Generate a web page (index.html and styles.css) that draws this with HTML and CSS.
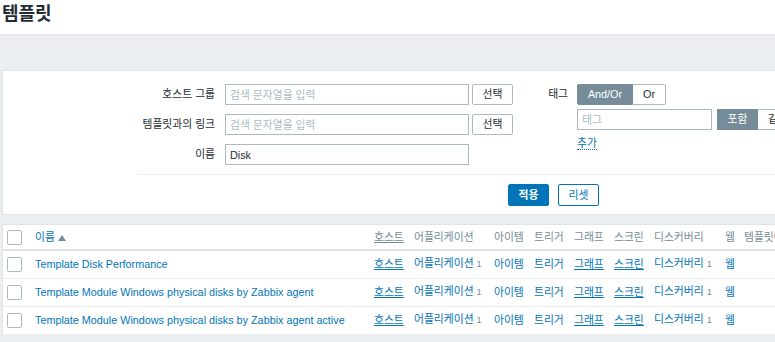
FILE: index.html
```html
<!DOCTYPE html>
<html lang="ko">
<head>
<meta charset="utf-8">
<title>템플릿</title>
<link rel="stylesheet" href="styles.css">
</head>
<body>
<header class="page-header">
  <h1 class="page-title">템플릿</h1>
</header>
<main class="content">
  <section class="filter">
    <div class="filter-body">
      <div class="filter-col filter-col-left">
        <div class="form-row">
          <label class="form-label">호스트 그룹</label>
          <div class="form-field">
            <input class="text-input" type="text" placeholder="검색 문자열을 입력">
            <button class="btn btn-select" type="button">선택</button>
          </div>
        </div>
        <div class="form-row">
          <label class="form-label">템플릿과의 링크</label>
          <div class="form-field">
            <input class="text-input" type="text" placeholder="검색 문자열을 입력">
            <button class="btn btn-select" type="button">선택</button>
          </div>
        </div>
        <div class="form-row">
          <label class="form-label">이름</label>
          <div class="form-field">
            <input class="text-input" type="text" value="Disk">
          </div>
        </div>
      </div>
      <div class="filter-col filter-col-right">
        <div class="form-row">
          <label class="form-label form-label-tag">태그</label>
          <div class="tag-field">
            <div class="segmented">
              <span class="seg seg-on seg-andor">And/Or</span><span class="seg seg-or">Or</span>
            </div>
            <div class="tag-row">
              <input class="text-input tag-input" type="text" placeholder="태그">
              <div class="segmented">
                <span class="seg seg-on seg-op">포함</span><span class="seg seg-op">같음</span>
              </div>
              <input class="text-input tag-value" type="text" placeholder="값">
            </div>
            <a class="link-add" href="#">추가</a>
          </div>
        </div>
      </div>
    </div>
    <div class="filter-footer">
      <button class="btn btn-apply" type="button">적용</button>
      <button class="btn btn-reset" type="button">리셋</button>
    </div>
  </section>

  <section class="list">
    <table class="list-table">
      <colgroup>
        <col class="c-check"><col class="c-name"><col class="c-host"><col class="c-app"><col class="c-item"><col class="c-trig"><col class="c-graph"><col class="c-screen"><col class="c-disc"><col class="c-web"><col class="c-linked">
      </colgroup>
      <thead>
        <tr>
          <th><span class="checkbox"></span></th>
          <th><a class="sort-link" href="#">이름</a><span class="sort-arrow"></span></th>
          <th><span class="th-underline">호스트</span></th>
          <th>어플리케이션</th>
          <th>아이템</th>
          <th>트리거</th>
          <th>그래프</th>
          <th>스크린</th>
          <th>디스커버리</th>
          <th>웹</th>
          <th>템플릿에 링크됨</th>
        </tr>
      </thead>
      <tbody>
        <tr>
          <td><span class="checkbox"></span></td>
          <td><a class="link" href="#">Template Disk Performance</a></td>
          <td><a class="link ul" href="#">호스트</a></td>
          <td><a class="link" href="#">어플리케이션</a> <sup class="count">1</sup></td>
          <td><a class="link" href="#">아이템</a></td>
          <td><a class="link" href="#">트리거</a></td>
          <td><a class="link ul" href="#">그래프</a></td>
          <td><a class="link ul" href="#">스크린</a></td>
          <td><a class="link" href="#">디스커버리</a> <sup class="count">1</sup></td>
          <td><a class="link" href="#">웹</a></td>
          <td></td>
        </tr>
        <tr>
          <td><span class="checkbox"></span></td>
          <td><a class="link" href="#">Template Module Windows physical disks by Zabbix agent</a></td>
          <td><a class="link ul" href="#">호스트</a></td>
          <td><a class="link" href="#">어플리케이션</a> <sup class="count">1</sup></td>
          <td><a class="link" href="#">아이템</a></td>
          <td><a class="link" href="#">트리거</a></td>
          <td><a class="link ul" href="#">그래프</a></td>
          <td><a class="link ul" href="#">스크린</a></td>
          <td><a class="link" href="#">디스커버리</a> <sup class="count">1</sup></td>
          <td><a class="link" href="#">웹</a></td>
          <td></td>
        </tr>
        <tr>
          <td><span class="checkbox"></span></td>
          <td><a class="link" href="#">Template Module Windows physical disks by Zabbix agent active</a></td>
          <td><a class="link ul" href="#">호스트</a></td>
          <td><a class="link" href="#">어플리케이션</a> <sup class="count">1</sup></td>
          <td><a class="link" href="#">아이템</a></td>
          <td><a class="link" href="#">트리거</a></td>
          <td><a class="link ul" href="#">그래프</a></td>
          <td><a class="link ul" href="#">스크린</a></td>
          <td><a class="link" href="#">디스커버리</a> <sup class="count">1</sup></td>
          <td><a class="link" href="#">웹</a></td>
          <td></td>
        </tr>
      </tbody>
    </table>
  </section>
</main>
</body>
</html>
```

FILE: styles.css
```css
* { box-sizing: border-box; }

html, body {
  margin: 0;
  padding: 0;
  overflow: hidden;
}

body {
  width: 1000px;
  height: 342px;
  background: #ebeef0;
  color: #1f2c33;
  font-family: "Liberation Sans", "Noto Sans CJK KR", Arial, sans-serif;
  font-size: 10.8px;
  line-height: 13px;
}

.page-header {
  background: #ffffff;
  height: 35px;
  border-bottom: 1px solid #dfe4e7;
  padding: 2px 0 0 2px;
}

.page-title {
  margin: 0;
  font-size: 18px;
  line-height: 24px;
  font-weight: bold;
  color: #1f2c33;
}

.content {
  padding: 35px 0 0 2px;
}

/* ---------- filter ---------- */
.filter {
  background: #ffffff;
  border: 1px solid #dfe4e7;
  border-right: none;
}

.filter-body {
  display: flex;
  padding: 13px 0 9px 0;
}

.filter-col-left {
  display: flex;
  flex-direction: column;
  gap: 9px;
  width: 545px;
}

.form-row {
  display: flex;
  align-items: flex-start;
}

.form-label {
  width: 222px;
  text-align: right;
  padding-right: 10px;
  line-height: 21px;
  white-space: nowrap;
}

.form-label-tag {
  width: 29px;
  padding-right: 9px;
}

.form-field {
  display: flex;
  gap: 3px;
}

.text-input {
  width: 244px;
  height: 21px;
  border: 1px solid #acbbc2;
  padding: 0 4px;
  font: inherit;
  color: #1f2c33;
  background: #ffffff;
  outline: none;
}

.text-input::placeholder {
  color: #acbbc2;
}

.btn {
  height: 21px;
  font: inherit;
  padding: 0;
  background: #ffffff;
  border: 1px solid #acbbc2;
  color: #1f2c33;
  border-radius: 2px;
  cursor: pointer;
}

.btn-select {
  width: 41px;
}

.tag-field {
  display: flex;
  flex-direction: column;
  gap: 4px;
}

.segmented {
  display: flex;
}

.seg {
  display: inline-block;
  height: 21px;
  line-height: 19px;
  border: 1px solid #acbbc2;
  background: #ffffff;
  color: #1f2c33;
  text-align: center;
}

.seg-on {
  background: #768d99;
  border-color: #768d99;
  color: #ffffff;
}

.seg-andor {
  width: 56px;
  border-radius: 2px 0 0 2px;
}

.seg-or {
  width: 33px;
  border-left: none;
  border-radius: 0 2px 2px 0;
}

.seg-op {
  width: 41px;
}

.seg-op + .seg-op {
  border-left: none;
}

.tag-row {
  display: flex;
  gap: 5px;
}

.tag-input {
  width: 135px;
}

.tag-value {
  width: 135px;
}

.link-add {
  align-self: flex-start;
  margin-top: 3px;
  color: #0275b8;
  text-decoration: none;
  border-bottom: 1px dotted #0275b8;
  line-height: 12px;
}

.filter-footer {
  margin-left: 134px;
  border-top: 1px solid #ebeef0;
  padding: 9px 0 8px 371px;
  display: flex;
  gap: 9px;
}

.btn-apply {
  width: 41px;
  height: 22px;
  background: #0275b8;
  border-color: #0275b8;
  color: #ffffff;
  font-weight: bold;
}

.btn-reset {
  width: 41px;
  height: 22px;
  border-color: #0275b8;
  color: #0275b8;
}

/* ---------- list ---------- */
.list {
  margin-top: 9px;
  background: #ffffff;
  border: 1px solid #dfe4e7;
  border-right: none;
  border-bottom: none;
}

.list-table {
  border-collapse: collapse;
  table-layout: fixed;
  width: 937px;
}

.c-check { width: 28px; }
.c-name { width: 339px; }
.c-host { width: 40px; }
.c-app { width: 80px; }
.c-item { width: 40px; }
.c-trig { width: 40px; }
.c-graph { width: 40px; }
.c-screen { width: 40px; }
.c-disc { width: 71px; }
.c-web { width: 19px; }
.c-linked { width: 200px; }

.list-table th,
.list-table td {
  padding: 0 0 0 4px;
  text-align: left;
  white-space: nowrap;
  overflow: hidden;
  vertical-align: middle;
}

.list-table th {
  height: 25px;
  font-weight: normal;
  color: #768d99;
  border-bottom: 2px solid #dfe4e7;
}

.list-table td {
  height: 28px;
  border-bottom: 1px solid #ebeef0;
}

.checkbox {
  display: block;
  width: 15px;
  height: 15px;
  border: 1px solid #acbbc2;
  border-radius: 2px;
  background: #ffffff;
}

.sort-link {
  color: #0275b8;
  text-decoration: none;
}

.sort-arrow {
  display: inline-block;
  margin-left: 3px;
  width: 0;
  height: 0;
  border-left: 4px solid transparent;
  border-right: 4px solid transparent;
  border-bottom: 6px solid #768d99;
  vertical-align: 0;
}

.th-underline {
  text-decoration: underline;
}

.link {
  color: #0275b8;
  text-decoration: none;
}

.link.ul {
  text-decoration: underline;
}

.count {
  color: #768d99;
  font-size: 9px;
  vertical-align: 0;
}
```
